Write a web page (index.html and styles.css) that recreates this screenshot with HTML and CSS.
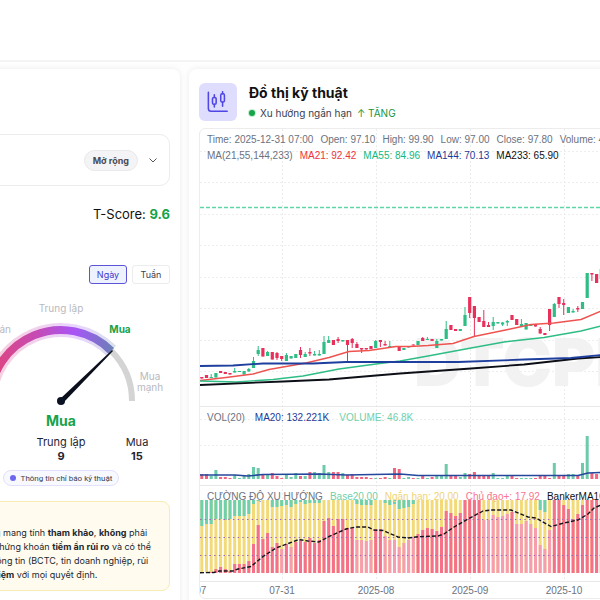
FILE: index.html
```html
<!DOCTYPE html>
<html lang="vi">
<head>
<meta charset="UTF-8">
<meta name="viewport" content="width=device-width, initial-scale=1.0">
<title>Đồ thị kỹ thuật</title>
<link rel="stylesheet" href="styles.css">
</head>
<body>
    <header class="topbar"></header>
    <main class="page">
        <section class="panel score-panel">
            <div class="expand-row">
                <button class="expand-btn" id="expandBtn">Mở rộng</button>
                <svg class="chevron" viewBox="0 0 10 10"><path d="M1.5 3.5 L5 7 L8.5 3.5"/></svg>
            </div>
            <p class="tscore">T-Score: <b>9.6</b></p>
            <div class="period">
                <button class="active">Ngày</button>
                <button>Tuần</button>
            </div>
            <svg class="gauge" viewBox="0 0 218 112">
                <defs>
                    <linearGradient id="arc" gradientUnits="userSpaceOnUse" x1="38" y1="0" x2="160" y2="0">
                        <stop offset="0" stop-color="#e0457b"/>
                        <stop offset="0.4" stop-color="#c44bb8"/>
                        <stop offset="0.7" stop-color="#a855f7"/>
                        <stop offset="1" stop-color="#6b7fb8"/>
                    </linearGradient>
                </defs>
                <path d="M38 105 A71 71 0 0 1 180 105" fill="none" stroke="#d4d4d4" stroke-width="6"/>
                <path d="M38 105 A71 71 0 0 1 159.2 54.8" fill="none" stroke="#fff" stroke-width="14"/>
                <path d="M38 105 A71 71 0 0 1 159.2 54.8" fill="none" stroke="url(#arc)" stroke-width="14" opacity="0.25"/>
                <path d="M38 105 A71 71 0 0 1 159.2 54.8" fill="none" stroke="url(#arc)" stroke-width="8"/>
                <path d="M107.5 103.5 L160 54 L161 55 L111 107 Z" fill="#0b0f1c"/>
                <circle cx="109" cy="105" r="4" fill="#0b1224"/>
                <text x="109" y="16">Trung lập</text>
                <text x="50" y="37">Bán</text>
                <text x="168" y="37" class="on">Mua</text>
                <text x="198" y="84">Mua</text>
                <text x="198" y="95">mạnh</text>
            </svg>
            <p class="verdict">Mua</p>
            <div class="counts">
                <div>Bán<b>2</b></div>
                <div>Trung lập<b>9</b></div>
                <div>Mua<b>15</b></div>
            </div>
            <button class="info"><i class="dot"></i>Thông tin chỉ báo kỹ thuật</button>
            <div class="notice">
                <b>Lưu ý</b>
                <p>Nội dung mang tính <b>tham khảo</b>, <b>không</b> phải<br>
                đầu tư, chứng khoán <b>tiềm ẩn rủi ro</b> và có thể<br>
                nhiều thông tin (BCTC, tin doanh nghiệp, rủi<br>
                <b>trách nhiệm</b> với mọi quyết định.</p>
            </div>
        </section>

        <section class="panel chart-panel">
            <div class="chart-head">
                <div class="chart-icon">
                    <svg viewBox="0 0 24 24"><path d="M1.5 1.5 V19 Q1.5 22 4.5 22 H22 M8 4 V7 M8 14.5 V17.5 M17 0.8 V3 M17 12 V16.5"/><rect x="6" y="7" width="4" height="7.5" rx="1.5"/><rect x="15" y="3" width="4" height="9" rx="1.5"/></svg>
                </div>
                <div>
                    <h1>Đồ thị kỹ thuật</h1>
                    <p class="trend"><i class="dot"></i>Xu hướng ngắn hạn <span>↑ TĂNG</span></p>
                </div>
            </div>
            <div class="chart">
                <svg id="plot"></svg>
                <div class="legend legend-price">
                    <span>Time: 2025-12-31 07:00</span>
                    <span>Open: 97.10</span>
                    <span>High: 99.90</span>
                    <span>Low: 97.00</span>
                    <span>Close: 97.80</span>
                    <span>Volume: 46.8K</span>
                </div>
                <div class="legend legend-ma">
                    <span>MA(21,55,144,233)</span>
                    <span class="red">MA21: 92.42</span>
                    <span class="green">MA55: 84.96</span>
                    <span class="blue">MA144: 70.13</span>
                    <span class="black">MA233: 65.90</span>
                </div>
                <div class="legend legend-vol">
                    <span>VOL(20)</span>
                    <span class="blue">MA20: 132.221K</span>
                    <span class="teal">VOLUME: 46.8K</span>
                </div>
                <div class="legend legend-power">
                    <span>CƯỜNG ĐỘ XU HƯỚNG</span>
                    <span class="teal">Base20.00</span>
                    <span class="yellow">Ngắn hạn: 20.00</span>
                    <span class="pink">Chủ đạo+: 17.92</span>
                    <span class="black">BankerMA10</span>
                </div>
            </div>
        </section>
    </main>
    <script src="chart.js"></script>
</body>
</html>
```
FILE: styles.css
```css
* {
    box-sizing: border-box;
}
body {
    margin: 0;
    font-family: Inter, "Open Sans", sans-serif;
    font-size: 10px;
    color: #1f2433;
    background: #fefefe;
    height: 100vh;
    overflow: hidden;
}
p, h1 {
    margin: 0;
}
button {
    font-family: inherit;
    cursor: pointer;
}
.topbar {
    height: 62px;
    background: #fff;
    border-bottom: 2px solid #f4f4f4;
}
/* the board is wider than the window and slides under both edges */
.page {
    display: grid;
    grid-template-columns: 238px 1fr;
    gap: 9px;
    margin: 7px -20px 0 -58px;
}
.panel {
    background: #fff;
    border-radius: 8px;
    box-shadow: 0 0 6px rgba(0, 0, 0, 0.08);
    padding: 10px;
    min-width: 0;
}
.score-panel {
    padding-top: 65px;
}

/* left panel */
.expand-row {
    display: flex;
    justify-content: flex-end;
    align-items: center;
    gap: 10px;
    height: 52px;
    padding: 0 11px;
    border: 1px solid #ececee;
    border-radius: 10px;
}
.expand-btn {
    height: 21px;
    padding: 0 8px;
    border: 1px solid #e9e9ec;
    border-radius: 11px;
    background: #f4f4f6;
    color: #4b4b52;
    font-size: 9px;
    font-weight: 700;
}
.chevron {
    width: 10px;
    height: 10px;
    fill: none;
    stroke: #555;
}
.tscore {
    margin-top: 18px;
    text-align: right;
    font-size: 13px;
    line-height: 20px;
    color: #111;
}
.tscore b {
    color: #16a34a;
}
.period {
    display: flex;
    justify-content: flex-end;
    gap: 5px;
    margin-top: 41px;
}
.period button {
    height: 19px;
    width: 38px;
    padding: 0;
    border: 1px solid #ececef;
    border-radius: 3px;
    background: #fff;
    color: #374151;
    font-size: 9px;
}
.period .active {
    border-color: #5b54d6;
    background: #eef2ff;
    color: #4338ca;
}
.gauge {
    display: block;
    width: 100%;
    margin-top: 12px;
}
.gauge text {
    fill: #b9b9c0;
    font-size: 10px;
    text-anchor: middle;
}
.gauge .on {
    fill: #16a34a;
    font-weight: 700;
}
.verdict {
    margin-top: 5px;
    text-align: center;
    font-size: 14px;
    line-height: 16px;
    font-weight: 700;
    color: #16a34a;
}
.counts {
    display: grid;
    grid-template-columns: repeat(3, 1fr);
    gap: 10px;
    margin-top: 6px;
    text-align: center;
    font-size: 11px;
    line-height: 14px;
}
.counts b {
    display: block;
}
.info {
    display: flex;
    align-items: center;
    gap: 5px;
    height: 16px;
    margin: 7px auto 0;
    padding: 0 6px;
    border: 1px solid #e2e0fb;
    border-radius: 8px;
    background: #f8f8ff;
    color: #374151;
    font-family: Roboto, sans-serif;
    font-size: 8px;
}
.dot {
    width: 6px;
    height: 6px;
    border-radius: 50%;
    background: #6d67f0;
}
.notice {
    margin-top: 15px;
    padding: 8px 9px;
    height: 90px;
    border: 1px solid #f7ecb5;
    border-radius: 8px;
    background: #fffcef;
    font-size: 9px;
    line-height: 14px;
    white-space: nowrap;
    color: #24272e;
}
.notice p {
    margin-top: 2px;
}

/* right panel */
.chart-panel {
    padding-top: 14px;
}
.chart-head {
    display: flex;
    align-items: flex-start;
    gap: 12px;
}
.chart-icon {
    display: grid;
    place-items: center;
    width: 38px;
    height: 38px;
    border-radius: 6px;
    background: #dfddfd;
}
.chart-icon svg {
    width: 22px;
    height: 22px;
    fill: none;
    stroke: #4f46e5;
    stroke-width: 1.7;
    stroke-linecap: round;
}
h1 {
    font-size: 14px;
    line-height: 20px;
    color: #111;
}
.trend {
    display: flex;
    align-items: center;
    gap: 5px;
    font-size: 10px;
    line-height: 20px;
    color: #374151;
}
.trend .dot {
    background: #16a34a;
    box-shadow: 0 0 0 1px #c5ecd2;
}
.trend span {
    color: #15953f;
}
.chart {
    position: relative;
    margin-top: 5px;
    border: 1px solid #ececec;
    border-radius: 6px;
    overflow: hidden;
}
#plot {
    display: block;
    width: 100%;
    height: 469px;
}
#plot text {
    font-family: "Liberation Sans", Arial, sans-serif;
    font-size: 10px;
    fill: #6b7280;
    text-anchor: middle;
}
#plot .watermark {
    font-family: Inter, sans-serif;
    font-size: 66px;
    font-weight: 900;
    fill: #f2f2f2;
    text-anchor: start;
}
.legend {
    position: absolute;
    left: 7px;
    display: flex;
    gap: 7px;
    font-family: "Liberation Sans", Arial, sans-serif;
    font-size: 10px;
    line-height: 12px;
    white-space: nowrap;
    color: #6b7280;
}
.legend-price { top: 5px; }
.legend-ma { top: 21px; }
.legend-vol { top: 283px; gap: 10px; }
.legend-power { top: 362px; }
.red { color: #ef3340; }
.green { color: #10b981; }
.blue { color: #1e3a96; }
.black { color: #111; }
.teal { color: #6fd0ac; }
.yellow { color: #efd374; }
.pink { color: #f8748f; }
```
FILE: chart.js
```js
var STEP = 4.7, FIRST = 2.3;
var UP = "#2ebd85", DOWN = "#e8305a";
var plot = document.getElementById("plot");

function add(tag, attrs, text) {
    var el = document.createElementNS("http://www.w3.org/2000/svg", tag);
    for (var k in attrs) el.setAttribute(k, attrs[k]);
    if (text) el.textContent = text;
    plot.appendChild(el);
}
function bar(cx, y, w, h, fill) {
    if (h > 0) add("rect", { x: cx - w / 2, y: y, width: w, height: h, fill: fill });
}
function hline(y, color, dash, width) {
    add("line", { x1: 0, x2: "100%", y1: y, y2: y, stroke: color, "stroke-width": width || 1, "stroke-dasharray": dash || "none" });
}
function curve(points, color, width, dash) {
    add("polyline", { points: points, fill: "none", stroke: color, "stroke-width": width, "stroke-dasharray": dash || "none", "stroke-linejoin": "round" });
}

// direction, body top, body bottom, high, low
var candles = [
    "d 248 249.5", "d 246 249", "u 248 249 245", "u 244 248.5", "d 242 244", "d 243 245", "d 244 245.5", "u 242 243.5 239", "u 242 243", "u 242 245.5",
    "u 240 242.5 239", "u 232 239 228", "u 221 225 217 227", "d 219 227.5", "u 223 227 222", "d 223 230.5", "d 224 229 223 231", "d 227 230 227 232", "u 226 232 224", "u 227 229.5",
    "u 225 229", "d 221 226 218 229", "u 225 228 223", "d 223 224.5 219 227", "u 225 226.5 222", "u 225 226.5 221", "u 213 225 207", "u 211 214 207", "d 211 216", "d 210 212 208 214",
    "u 211 212.5", "d 211 216 211 233", "d 210 214 209 219", "d 215 219 213", "d 219 220.5 219 224", "d 219 220.5", "d 217 220", "u 212 219 211", "d 211 213 211 218", "d 215 216.5 212",
    "u 217 218 212", "d 217 218", "d 218 222", "u 219 221", "u 217 218.5", "d 215.5 216.5", "u 212 216", "d 209 212 208", "u 210 211 208", "d 210 212",
    "u 212 219 210", "u 210 211.5", "u 200 210 192", "d 196 201", "d 200 202", "u 200 202", "u 186 197 178", "d 168 184 168 189", "d 177 189 177 208", "d 188 193",
    "d 192 198 181", "d 196 198 193", "u 193 197 188 201", "u 193 194.5", "u 193.5 195.5 193 197", "u 192 193.5 191 197", "d 186 191", "d 190 196", "u 195 197 190", "u 194 200.5",
    "u 195 197", "d 195 197.5", "d 200 204.5 198", "d 204 206", "d 180 196 180 202", "u 175 188 174", "d 168 175 168 179", "d 174 176 170 186", "u 178 184", "u 182 183.5 180",
    "d 179 180.5 177 183", "u 173 180", "u 144 169", "d 144 145.5 144 152", "d 145 154", "u 140 150"
];
var volume = [5, 5, 3, 9, 2, 2, 1, 4, 1, 4, 5, 12, 11, 5, 4, 6, 3, 1, 4, 2, 6, 3, 3, 7, 7, 6, 14, 7, 7, 7, 6, 4, 5, 2, 2, 2, 1, 1, 1, 2,
    1, 11, 10, 1, 2, 1, 1, 4, 1, 2, 3, 3, 15, 3, 3, 2, 6, 5, 7, 4, 4, 4, 6, 1, 1, 4, 3, 1, 1, 1, 1, 1, 3, 3, 1, 16, 4, 3, 5, 5, 3, 16, 43, 6, 5, 6];
var power = [0, 0, 1, 4, 6, 4, 2, 9, 9, 9, 12, 29, 48, 34, 40, 26, 30, 24, 29, 26, 31, 33, 31, 35, 30, 33, 52, 55, 47, 54, 54, 45, 45, 33, 33, 32, 33, 44, 44, 37,
    33, 33, 26, 30, 33, 36, 39, 43, 45, 44, 42, 46, 62, 60, 57, 60, 73, 73, 73, 73, 53, 53, 58, 56, 57, 59, 61, 49, 49, 52, 49, 45, 28, 24, 43, 73, 73, 68, 64, 54, 59, 68, 73, 73, 73, 73];
var base = [26, 24, 24, 19, 19, 20, 19, 16, 16, 16, 14, 4, 1, 0, 0, 7, 7, 6, 5, 7, 4, 2, 4, 3, 3, 3, 0, 0, 0, 0, 0, 0, 0, 4, 5, 5, 5, 0, 0, 3, 5, 4, 9, 8, 7, 4];
base[72] = 10;
base[73] = 12;
var weak = [17, 19, 33, 34, 35, 36, 39, 40, 41, 42, 43, 44, 45, 60, 61, 62, 63, 64, 65, 67, 68, 69, 70, 71, 72, 73, 74];

// grid
[22, 53, 85, 116, 148, 179, 211, 242, 290, 316].forEach(function (y) { hline(y + 0.5, "#eeeeee", "2 2"); });
[17, 37, 57, 77].forEach(function (i) {
    var x = Math.round(FIRST + i * STEP) + 0.5;
    add("line", { x1: x, x2: x, y1: 0, y2: 452, stroke: "#ebebeb", "stroke-dasharray": "2 2" });
});
[277, 356, 452].forEach(function (y) { hline(y + 0.5, "#e8e8e8"); });
add("text", { x: 214, y: 257, "class": "watermark" }, "DTCPRO");
hline(78.5, "#5fd6a8", "4 2", 1.4);

candles.forEach(function (row, i) {
    var c = row.split(" "), x = FIRST + i * STEP - 0.5;
    var color = c[0] === "u" ? UP : DOWN;
    var top = +c[1], bottom = +c[2];
    var high = c[3] ? +c[3] : top, low = c[4] ? +c[4] : bottom;
    bar(x, high, 1, low - high, color);
    bar(x, top, 3.2, bottom - top, color);
    bar(x, 350 - volume[i], 3, volume[i], c[0] === "u" ? "#6dcbaa" : "#f0647f");
    var b = base[i] || 0;
    bar(x, 371, 3, 73, "#f3da78");
    bar(x, 371, 3, b, "#6fd0ac");
    bar(x, 444 - power[i], 3, power[i], weak.indexOf(i) < 0 ? "#f5708a" : "#f79db0");
});

curve("0,251.5 26,248.5 53,245 69,240.5 86,237.5 106,234 129,228.5 149,222.5 169,221.5 196,217.5 210,217.5 228,216.5 253,214.5 274,207.5 308,200.5 331,195.5 354,194 381,190.5 401,182 420,174", "#ef5350", 1.4);
curve("0,252 36,253 73,250.5 103,247 139,240 176,235 200,232 228,227 271,219 304,213 344,208.5 381,202 401,197 420,192", "#2ebd85", 1.4);
curve("0,256 83,252.5 129,250.5 176,246.5 200,244.5 271,239.5 324,235.5 378,229.5 401,228 420,224", "#0c0f16", 1.8);
curve("0,237 33,236.5 63,234.5 113,234.5 146,233 258,233 324,230.5 371,229 401,226 420,222", "#1e3f9e", 1.8);
curve("0,346 35,346 48,347 63,345.5 120,345 146,346 200,345 218,346.5 378,346.5 388,344 401,343.5 420,343", "#26489c", 1.6);

[390, 408, 426].forEach(function (y) { hline(y + 0.5, "#a069b0", "1.5 3.2"); });
curve("0,443.7 14,443.5 19,442 33,442 38,440 51,437.5 63,427.5 76,419 99,410.5 108,412 119,413 129,407.5 146,400 156,398 168,398 174,401 183,401.5 198,408 208,409 218,407.7 238,407 244,405 254,398 268,390 283,382 291,381 311,381 328,388 336,389 351,397.5 364,394 378,391 388,385 394,379 401,376 420,374", "#15151c", 1.4, "4 2");

["2025-07", "07-31", "2025-08", "2025-09", "2025-10"].forEach(function (label, n) {
    add("text", { x: Math.round(FIRST + (n * 20 - 3) * STEP), y: 465 }, label);
});

document.querySelectorAll(".period button").forEach(function (btn) {
    btn.addEventListener("click", function () {
        document.querySelector(".period .active").classList.remove("active");
        btn.classList.add("active");
    });
});
```
